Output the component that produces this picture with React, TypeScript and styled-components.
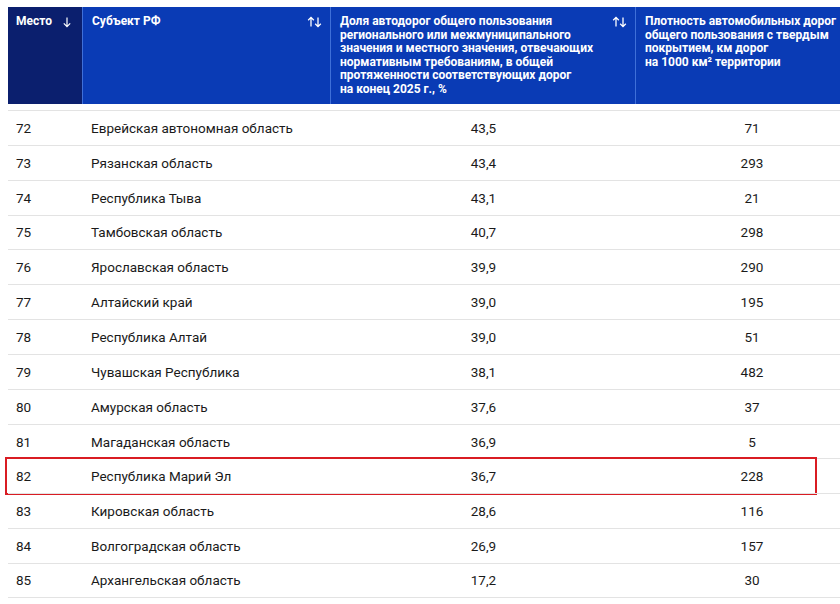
import React from 'react';
import styled, { createGlobalStyle } from 'styled-components';

const GlobalStyle = createGlobalStyle`
  html, body {
    margin: 0;
    padding: 0;
    background: #ffffff;
    overflow: hidden;
  }
  body {
    font-family: Roboto, 'Liberation Sans', Arial, sans-serif;
    color: #1a1a1a;
  }
`;

const COLS = '75px 248px 305px 232px';

const Page = styled.div`
  width: 840px;
  height: 604px;
  padding: 7px 0 0 8px;
  box-sizing: border-box;
  overflow: hidden;
`;

const Table = styled.div`
  width: 860px;
`;

const HeadRow = styled.div`
  display: grid;
  grid-template-columns: ${COLS};
  height: 97px;
  margin-bottom: 6px;
`;

const HeadCell = styled.div<{ $dark?: boolean; $last?: boolean }>`
  display: flex;
  align-items: flex-start;
  justify-content: space-between;
  gap: 6px;
  padding: 8px 8px 0 ${p => (p.$dark ? '8px' : '9px')};
  background: ${p => (p.$dark ? '#0b1f6e' : '#0a3bb5')};
  border-right: ${p => (p.$last ? 'none' : '1px solid #3f6fd8')};
  color: #ffffff;
  font-size: 12px;
  font-weight: 700;
  line-height: 13.5px;
  box-sizing: border-box;
`;

const HeadText = styled.span`
  white-space: pre-line;
`;

const SortIcon = styled.svg`
  flex: 0 0 auto;
  margin-top: 1px;
`;

const Row = styled.div`
  position: relative;
  display: grid;
  grid-template-columns: ${COLS};
  height: 34.85px;
  border-top: 1px solid #e3e3e3;
  box-sizing: border-box;
  align-items: center;
  font-size: 13.5px;
  &:last-child {
    border-bottom: 1px solid #e3e3e3;
  }
`;

const Cell = styled.div<{ $center?: boolean }>`
  padding: 0 8px;
  text-align: ${p => (p.$center ? 'center' : 'left')};
  white-space: nowrap;
`;

const Highlight = styled.div`
  position: absolute;
  left: -3px;
  top: -2.5px;
  width: 812px;
  height: 38px;
  border: 2.5px solid #d91c23;
  box-sizing: border-box;
  pointer-events: none;
`;

const DownArrow = () => (
  <SortIcon width="14" height="12" viewBox="0 0 14 12">
    <path d="M7 1.5 V10.5 M3.8 7.4 L7 10.6 L10.2 7.4" stroke="#fff" strokeWidth="1.2" fill="none" />
  </SortIcon>
);

const BothArrows = () => (
  <SortIcon width="15" height="12" viewBox="0 0 15 12">
    <path d="M4 10.5 V1.5 M1.2 4.3 L4 1.4 L6.8 4.3" stroke="#fff" strokeWidth="1.3" fill="none" />
    <path d="M11 1.5 V10.5 M8.2 7.7 L11 10.6 L13.8 7.7" stroke="#fff" strokeWidth="1.3" fill="none" />
  </SortIcon>
);

const rows: [number, string, string, string][] = [
  [72, 'Еврейская автономная область', '43,5', '71'],
  [73, 'Рязанская область', '43,4', '293'],
  [74, 'Республика Тыва', '43,1', '21'],
  [75, 'Тамбовская область', '40,7', '298'],
  [76, 'Ярославская область', '39,9', '290'],
  [77, 'Алтайский край', '39,0', '195'],
  [78, 'Республика Алтай', '39,0', '51'],
  [79, 'Чувашская Республика', '38,1', '482'],
  [80, 'Амурская область', '37,6', '37'],
  [81, 'Магаданская область', '36,9', '5'],
  [82, 'Республика Марий Эл', '36,7', '228'],
  [83, 'Кировская область', '28,6', '116'],
  [84, 'Волгоградская область', '26,9', '157'],
  [85, 'Архангельская область', '17,2', '30'],
];

const App: React.FC = () => {
  return (
    <Page>
      <GlobalStyle />
      <Table>
        <HeadRow>
          <HeadCell $dark>
            <HeadText>Место</HeadText>
            <DownArrow />
          </HeadCell>
          <HeadCell>
            <HeadText>Субъект РФ</HeadText>
            <BothArrows />
          </HeadCell>
          <HeadCell>
            <HeadText>
              {'Доля автодорог общего пользования\nрегионального или межмуниципального\nзначения и местного значения, отвечающих\nнормативным требованиям, в общей\nпротяженности соответствующих дорог\nна конец 2025 г., %'}
            </HeadText>
            <BothArrows />
          </HeadCell>
          <HeadCell $last>
            <HeadText>
              {'Плотность автомобильных дорог\nобщего пользования с твердым\nпокрытием, км дорог\nна 1000 км² территории'}
            </HeadText>
          </HeadCell>
        </HeadRow>
        {rows.map(([place, name, share, density]) => (
          <Row key={place}>
            <Cell>{place}</Cell>
            <Cell>{name}</Cell>
            <Cell $center>{share}</Cell>
            <Cell $center>{density}</Cell>
            {place === 82 && <Highlight />}
          </Row>
        ))}
      </Table>
    </Page>
  );
};

export default App;
